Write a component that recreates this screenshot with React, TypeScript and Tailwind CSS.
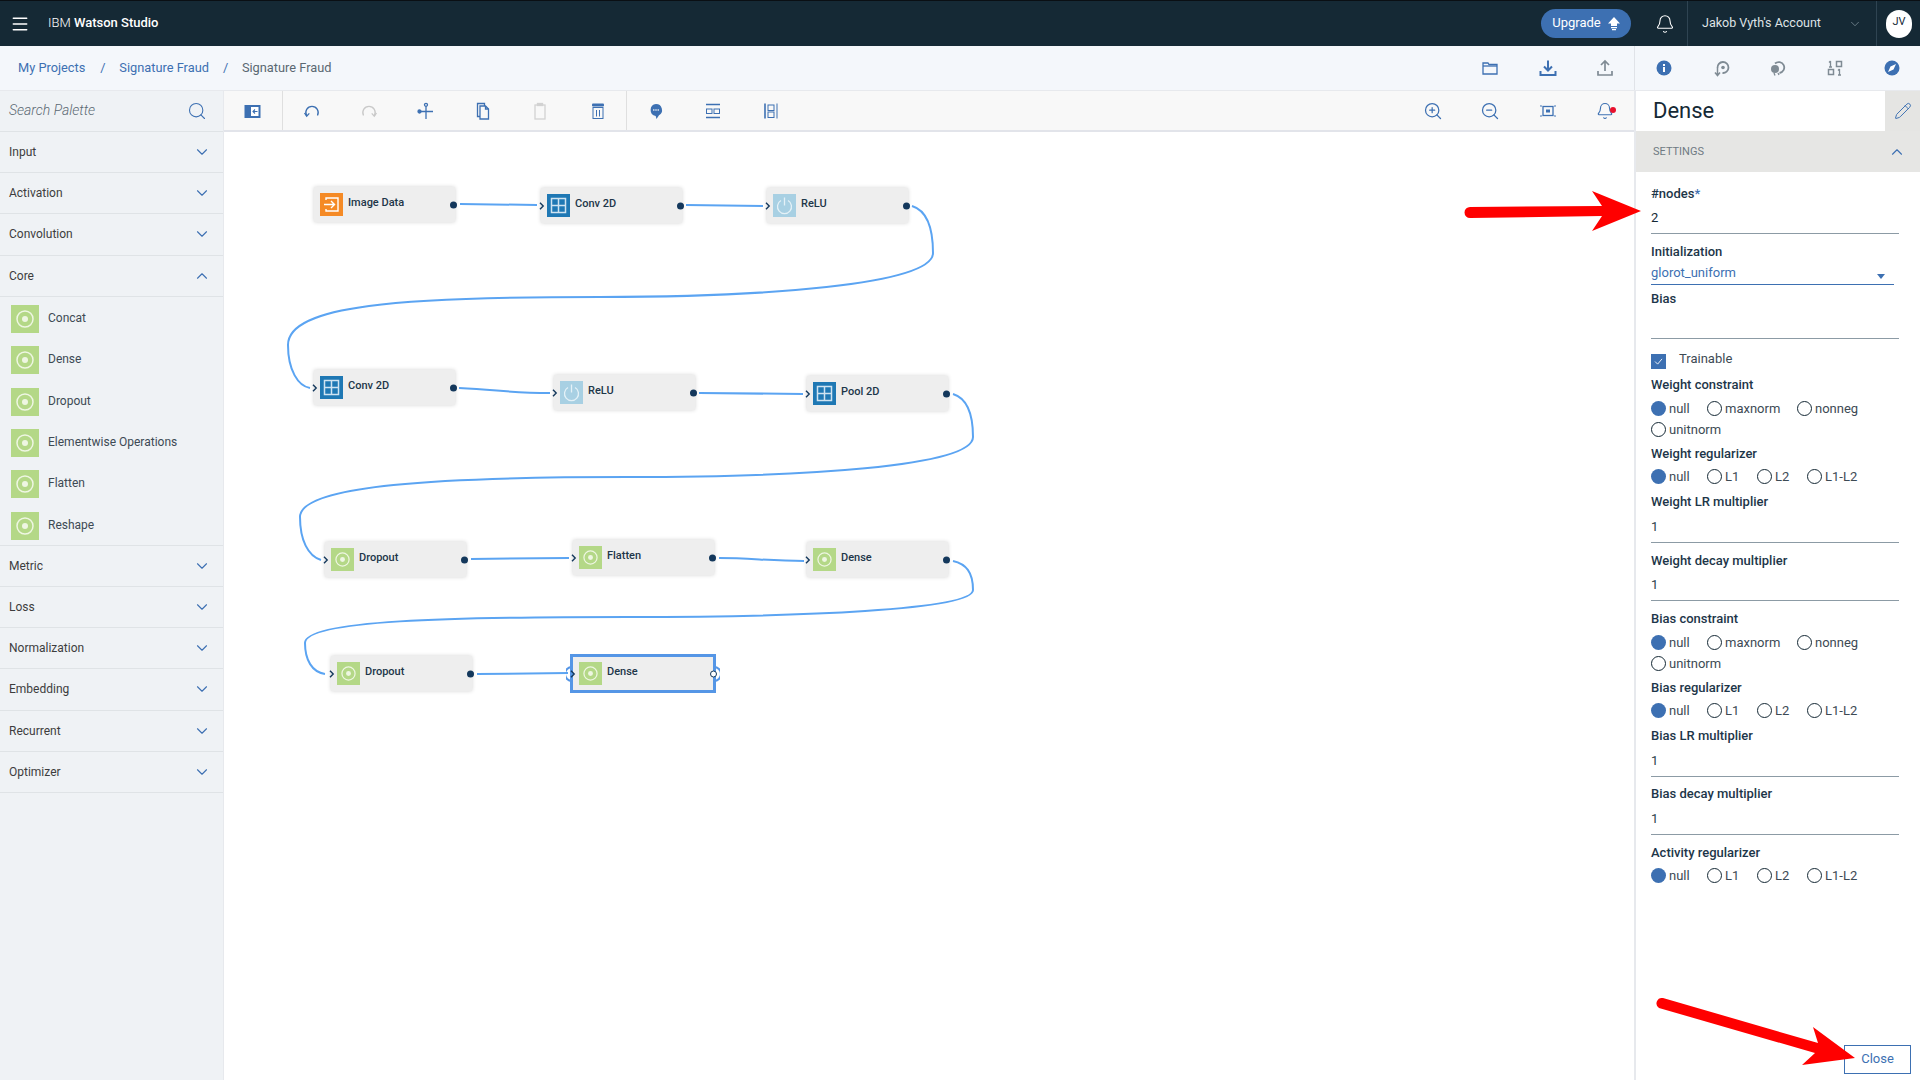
import { useState } from "react";
import { Bell, ChevronDown, ChevronUp, Menu, Pencil, Search, ZoomIn, ZoomOut } from "lucide-react";

const CATEGORIES_TOP = ["Input", "Activation", "Convolution"];
const CATEGORIES_BOTTOM = ["Metric", "Loss", "Normalization", "Embedding", "Recurrent", "Optimizer"];
const CORE_ITEMS = ["Concat", "Dense", "Dropout", "Elementwise Operations", "Flatten", "Reshape"];

type NodeKind = "input" | "grid" | "power" | "target";

const NODES: { label: string; kind: NodeKind; pos: string; noInput?: boolean }[] = [
  { label: "Image Data", kind: "input", pos: "left-[90px] top-[55px]", noInput: true },
  { label: "Conv 2D", kind: "grid", pos: "left-[317px] top-[56px]" },
  { label: "ReLU", kind: "power", pos: "left-[543px] top-[56px]" },
  { label: "Conv 2D", kind: "grid", pos: "left-[90px] top-[238px]" },
  { label: "ReLU", kind: "power", pos: "left-[330px] top-[243px]" },
  { label: "Pool 2D", kind: "grid", pos: "left-[583px] top-[244px]" },
  { label: "Dropout", kind: "target", pos: "left-[101px] top-[410px]" },
  { label: "Flatten", kind: "target", pos: "left-[349px] top-[408px]" },
  { label: "Dense", kind: "target", pos: "left-[583px] top-[410px]" },
  { label: "Dropout", kind: "target", pos: "left-[107px] top-[524px]" },
];

// link paths are in page coordinates, the svg viewBox starts at the canvas corner
const LINKS = [
  "M460 204 L537 205",
  "M686 205 L763 206",
  "M912 206 C925 210 933 225 933 253 C933 285 760 297 600 297 C400 297 288 305 288 345 C288 370 298 386 310 388",
  "M459 388 C500 390 510 393 550 393",
  "M699 393 L803 394",
  "M953 394 C966 398 973 412 973 437 C973 467 800 477 628 477 C440 477 300 485 300 517 C300 540 308 556 321 560",
  "M471 559 L569 558",
  "M719 558 C750 558 770 561 804 561",
  "M953 561 C966 564 973 572 973 590 C973 610 800 617 628 617 C450 617 305 620 305 643 C305 660 312 672 325 674",
  "M477 674 L568 673",
];

function Ic({ children, cls = "text-[#3d70b2]" }: { children: React.ReactNode; cls?: string }) {
  return (
    <svg viewBox="0 0 20 20" fill="none" stroke="currentColor" strokeWidth="1.3" className={`w-5 h-5 ${cls}`}>
      {children}
    </svg>
  );
}

function Cell({ children, w = "w-[57.5px]" }: { children: React.ReactNode; w?: string }) {
  return <div className={`${w} h-full flex items-center justify-center shrink-0`}>{children}</div>;
}

function NodeIcon({ kind }: { kind: NodeKind }) {
  if (kind === "input")
    return (
      <div className="w-[23px] h-[23px] bg-[#f58a25] flex items-center justify-center shrink-0">
        <svg viewBox="0 0 23 23" fill="none" stroke="#fff" strokeWidth="1.4" className="w-[23px] h-[23px]">
          <path d="M6 7V5h12v13H6v-2" />
          <path d="M4 11.5h10M11 8l3.5 3.5L11 15" />
        </svg>
      </div>
    );
  if (kind === "grid")
    return (
      <div className="w-[23px] h-[23px] bg-[#1f78b4] flex items-center justify-center shrink-0">
        <svg viewBox="0 0 23 23" fill="none" stroke="#cfe3f1" strokeWidth="1.5" className="w-[23px] h-[23px]">
          <rect x="4.5" y="4.5" width="14" height="14" />
          <path d="M11.5 4.5v14M4.5 11.5h14" />
        </svg>
      </div>
    );
  if (kind === "power")
    return (
      <div className="w-[23px] h-[23px] bg-[#a8d0e3] flex items-center justify-center shrink-0">
        <svg viewBox="0 0 23 23" fill="none" stroke="#e4f1f7" strokeWidth="1.3" className="w-[23px] h-[23px]">
          <path d="M8 6.5a7 7 0 1 0 7 0M11.500 3.500v8" />
        </svg>
      </div>
    );
  return <TargetIcon box="w-[23px] h-[23px]" size="w-[23px] h-[23px]" />;
}

function TargetIcon({ box, size }: { box: string; size: string }) {
  return (
    <div className={`${box} bg-[#b4d887] flex items-center justify-center shrink-0`}>
      <svg viewBox="0 0 28 28" fill="none" className={size}>
        <circle cx="14" cy="14" r="8" stroke="#eef6e2" strokeWidth="1.5" />
        <circle cx="14" cy="14" r="3" fill="#eef6e2" />
      </svg>
    </div>
  );
}

function InChevron({ cls = "left-[-2px]" }: { cls?: string }) {
  return (
    <svg viewBox="0 0 6 8" fill="none" stroke="#14385c" strokeWidth="1.4" className={`absolute ${cls} top-1/2 -translate-y-1/2 w-[6px] h-2`}>
      <path d="M1 .800 4.200 4 1 7.200" />
    </svg>
  );
}

function GraphNode({ label, kind, pos, noInput }: { label: string; kind: NodeKind; pos: string; noInput?: boolean }) {
  return (
    <div className={`absolute ${pos} w-[141px] h-[35px] bg-[#eeeeee] shadow-[0_0_4px_rgba(0,0,0,0.18)] flex items-center gap-[5px] pl-[6px]`}>
      <NodeIcon kind={kind} />
      <span className="text-[11px] font-medium text-[#1d3649] whitespace-nowrap -mt-[2px]">{label}</span>
      {!noInput && <InChevron />}
      <div className="absolute right-[-2px] top-1/2 -translate-y-1/2 w-[7px] h-[7px] rounded-full bg-[#14385c]" />
    </div>
  );
}

function CategoryRow({ label, open }: { label: string; open?: boolean }) {
  return (
    <div className="h-[41.2px] flex items-center justify-between pl-[9px] pr-[12px] border-b border-[#dfe3e6]">
      <span className="text-[12px] text-[#3d3d3d]">{label}</span>
      {open ? (
        <ChevronUp className="w-[18px] h-[18px] text-[#3d70b2]" strokeWidth={1.5} />
      ) : (
        <ChevronDown className="w-[18px] h-[18px] text-[#3d70b2]" strokeWidth={1.5} />
      )}
    </div>
  );
}

function Label({ children, cls = "" }: { children: React.ReactNode; cls?: string }) {
  return <div className={`h-[18px] leading-[20px] text-[13px] font-medium text-[#1d3649] ${cls}`}>{children}</div>;
}

function NumberField({ label, value, cls, box }: { label: string; value: string; cls: string; box: string }) {
  return (
    <>
      <Label cls={cls}>{label}</Label>
      <div className={`${box} flex items-center pt-[1px] border-b border-[#8c9ba5] text-[13px] text-[#2d3f4c] w-[248px]`}>{value}</div>
    </>
  );
}

function Radio({ label, on, w }: { label: string; on?: boolean; w: string }) {
  return (
    <div className={`${w} flex items-center gap-[3px] text-[13px] text-[#3d4a54] h-[21px]`}>
      <span className={`w-[15px] h-[15px] rounded-full shrink-0 ${on ? "bg-[#3d70b2]" : "border border-[#152935] bg-white"}`} />
      {label}
    </div>
  );
}

function ConstraintRadios() {
  return (
    <>
      <div className="flex mt-[5px]">
        <Radio label="null" on w="w-[56px]" />
        <Radio label="maxnorm" w="w-[90px]" />
        <Radio label="nonneg" w="w-[90px]" />
      </div>
      <Radio label="unitnorm" w="w-[90px]" />
    </>
  );
}

function RegularizerRadios() {
  return (
    <div className="flex mt-[4px]">
      <Radio label="null" on w="w-[56px]" />
      <Radio label="L1" w="w-[50px]" />
      <Radio label="L2" w="w-[50px]" />
      <Radio label="L1-L2" w="w-[70px]" />
    </div>
  );
}

function SettingsPanel() {
  return (
    <aside className="w-[286px] shrink-0 border-l-2 border-[#e7e9ed] bg-white flex flex-col">
      <div className="h-[40px] flex items-center justify-between shrink-0">
        <span className="pl-[17px] text-[22px] text-[#152935] -mt-[2px]">Dense</span>
        <div className="w-[35px] h-full bg-[#e5e5e3] flex items-center justify-center">
          <Pencil className="w-[18px] h-[18px] text-[#3d70b2]" strokeWidth={1.3} />
        </div>
      </div>
      <div className="h-[41px] bg-[#e6e6e4] flex items-center justify-between pl-[17px] pr-[14px] shrink-0">
        <span className="text-[11px] pt-[1px] text-[#6f7a82]">SETTINGS</span>
        <ChevronUp className="w-[18px] h-[18px] text-[#3d70b2]" strokeWidth={1.5} />
      </div>

      <div className="pl-[15px] pt-[12px] flex flex-col flex-1">
        <Label>
          #nodes<span className="text-[#3d70b2]">*</span>
        </Label>
        <div className="h-[32px] flex items-center border-b border-[#8c9ba5] text-[13px] text-[#152935] w-[248px]">2</div>

        <Label cls="mt-[8px]">Initialization</Label>
        <div className="h-[25px] w-[243px] flex items-center justify-between pt-[1px] pr-[9px] border-b border-[#3d70b2] text-[13px] text-[#3d70b2]">
          glorot_uniform
          <svg viewBox="0 0 8 5" className="w-2 h-[5px] mt-[8px]" fill="#3d70b2">
            <path d="M0 0h8L4 5z" />
          </svg>
        </div>

        <Label cls="mt-[4px]">Bias</Label>
        <div className="h-[32px] border-b border-[#8c9ba5] w-[248px]" />

        <div className="mt-[13px] h-[18px] flex items-start gap-[13px] text-[13px] leading-[14px] text-[#3d4a54]">
          <span className="w-[15px] h-[15px] bg-[#3d70b2] flex items-center justify-center mt-[2px]">
            <svg viewBox="0 0 10 8" fill="none" stroke="#fff" strokeWidth="1" className="w-[9px] h-[7px]">
              <path d="M1 4l3 3 5-6" />
            </svg>
          </span>
          Trainable
        </div>

        <Label cls="mt-[5px]">Weight constraint</Label>
        <ConstraintRadios />
        <Label cls="mt-[4px]">Weight regularizer</Label>
        <RegularizerRadios />
        <NumberField label="Weight LR multiplier" value="1" cls="mt-[5px]" box="h-[33px]" />
        <NumberField label="Weight decay multiplier" value="1" cls="mt-[8px]" box="h-[32px]" />

        <Label cls="mt-[8px]">Bias constraint</Label>
        <ConstraintRadios />
        <Label cls="mt-[4px]">Bias regularizer</Label>
        <RegularizerRadios />
        <NumberField label="Bias LR multiplier" value="1" cls="mt-[5px]" box="h-[33px]" />
        <NumberField label="Bias decay multiplier" value="1" cls="mt-[7px]" box="h-[33px]" />

        <Label cls="mt-[8px]">Activity regularizer</Label>
        <RegularizerRadios />

        <button className="mt-auto mb-[6px] mr-[9px] self-end w-[67px] h-[29px] pb-[2px] border-[1.5px] border-[#3d70b2] text-[13px] text-[#3d70b2] bg-white">
          Close
        </button>
      </div>
    </aside>
  );
}

function Toolbar() {
  return (
    <div className="h-[41px] bg-[#f8f8f8] border-b-2 border-[#e2e4ea] flex items-center shrink-0">
      <Cell w="w-[58px]">
        <Ic>
          <rect x="1.500" y="4" width="16" height="13" fill="currentColor" stroke="none" />
          <rect x="8" y="6" width="7.500" height="9" fill="#fff" stroke="none" />
          <path d="M14.500 10.500h-4M12 8.500l-2 2 2 2" strokeWidth="1.100" />
        </Ic>
      </Cell>
      <div className="flex h-full border-x border-[#dfdfdf]">
        <Cell w="w-[57.2px]">
          <Ic>
            <path d="M4.500 14.500a6.200 6.200 0 1 1 11 0" />
            <path d="M2.500 12l2.200 3.200 2.600-2.800" />
          </Ic>
        </Cell>
        <Cell w="w-[57.2px]">
          <Ic cls="text-[#c9c9c9]">
            <path d="M15.500 14.500a6.200 6.200 0 1 0-11 0" />
            <path d="M17.500 12l-2.200 3.200-2.600-2.800" />
          </Ic>
        </Cell>
        <Cell w="w-[57.2px]">
          <Ic>
            <path d="M10 5.500V18M3 10.500h14" />
            <circle cx="10" cy="3.800" r="1.500" />
            <circle cx="3.500" cy="10.500" r="1.500" fill="currentColor" />
          </Ic>
        </Cell>
        <Cell w="w-[57.2px]">
          <Ic>
            <path d="M7 15.500H4.500V2.500h7V5" />
            <path d="M7 5h5.500l3 3v10H7z" />
            <path d="M12.500 5v3h3" />
          </Ic>
        </Cell>
        <Cell w="w-[57.2px]">
          <Ic cls="text-[#d2d2d2]">
            <rect x="5" y="4" width="10" height="14" />
            <rect x="7.500" y="2.500" width="5" height="2" fill="currentColor" />
          </Ic>
        </Cell>
        <Cell w="w-[57.2px]">
          <Ic>
            <rect x="4" y="2.500" width="12" height="3" rx="1" fill="currentColor" stroke="none" />
            <rect x="5" y="6.500" width="10" height="11" strokeWidth="1" />
            <path d="M8.500 9v6.500M11.500 9v6.500" strokeWidth="1" />
          </Ic>
        </Cell>
      </div>
      <Cell>
        <Ic>
          <path d="M10 3a6 6 0 0 1 3 11.200L10.500 18l-.8-3.100A6 6 0 0 1 10 3z" fill="currentColor" stroke="none" />
          <path d="M7.200 9h1.200M9.400 9h1.200M11.600 9h1.200" stroke="#fff" />
        </Ic>
      </Cell>
      <Cell>
        <Ic>
          <path d="M3 3.500h14M3 16.500h14" strokeWidth="1.500" />
          <rect x="3.500" y="8" width="5.500" height="4.500" strokeWidth="1" />
          <rect x="11" y="8" width="5.500" height="4.500" strokeWidth="1" />
        </Ic>
      </Cell>
      <Cell>
        <Ic>
          <path d="M4 2.500v15" strokeWidth="1.600" />
          <path d="M16 2.500v15" strokeWidth="1" />
          <rect x="7" y="4" width="6" height="5.500" strokeWidth="1" />
          <rect x="7" y="11" width="6" height="5.500" strokeWidth="1" />
        </Ic>
      </Cell>
      <div className="ml-auto flex h-full">
        <Cell>
          <ZoomIn className="w-5 h-5 text-[#3d70b2]" strokeWidth={1.5} />
        </Cell>
        <Cell>
          <ZoomOut className="w-5 h-5 text-[#3d70b2]" strokeWidth={1.5} />
        </Cell>
        <Cell>
          <Ic>
            <rect x="5" y="5.500" width="10" height="9" />
            <rect x="8" y="8.500" width="4" height="3" fill="currentColor" stroke="none" />
            <path d="M2.500 4.500l1 1M17.500 4.500l-1 1M2.500 15.500l1-1M17.500 15.500l-1-1" />
          </Ic>
        </Cell>
        <Cell>
          <div className="relative">
            <Bell className="w-[18px] h-[18px] text-[#3d70b2]" strokeWidth={1.5} />
            <span className="absolute right-[-2px] top-[5px] w-[6px] h-[6px] rounded-full bg-[#e8112d]" />
          </div>
        </Cell>
      </div>
    </div>
  );
}

function Canvas() {
  return (
    <div className="relative flex-1 bg-white">
      <svg viewBox="224 132 1410 948" className="absolute inset-0 w-full h-full" fill="none" stroke="#5ba4f2" strokeWidth="2">
        {LINKS.map((d, i) => (
          <path key={i} d={d} />
        ))}
      </svg>
      {NODES.map((n, i) => (
        <GraphNode key={i} {...n} />
      ))}
      <div className="absolute left-[346px] top-[522px] w-[146px] h-[39px] bg-[#eeeeee] border-[3px] border-[#5596e6] flex items-center gap-[5px] pl-[6px]">
        <NodeIcon kind="target" />
        <span className="text-[11px] font-medium text-[#1d3649] -mt-[2px]">Dense</span>
        <svg viewBox="0 0 6 16" fill="none" stroke="#5596e6" strokeWidth="2" className="absolute left-[-7px] top-1/2 -translate-y-1/2 w-[6px] h-4">
          <path d="M6 1A7 7 0 0 0 6 15" />
        </svg>
        <svg viewBox="0 0 6 16" fill="none" stroke="#5596e6" strokeWidth="2" className="absolute right-[-7px] top-1/2 -translate-y-1/2 w-[6px] h-4">
          <path d="M0 1A7 7 0 0 1 0 15" />
        </svg>
        <InChevron cls="left-[-3px]" />
        <div className="absolute right-[-4px] top-1/2 -translate-y-1/2 w-[7px] h-[7px] rounded-full bg-white border border-[#14385c]" />
      </div>
    </div>
  );
}

export default function App() {
  const [selected] = useState("Dense");

  return (
    <div className="relative w-[1920px] h-[1080px] overflow-hidden flex flex-col bg-white font-['Roboto',sans-serif]">
      {/* Top bar */}
      <header className="h-[46px] bg-[#152935] border-t border-[#0a0f14] flex items-center text-white shrink-0">
        <Menu className="w-[20px] h-[20px] ml-[10px]" strokeWidth={1.8} />
        <div className="ml-[18px] text-[13px] -mt-[2px]">
          <span className="font-light">IBM</span> <span className="font-medium">Watson Studio</span>
        </div>
        <div className="ml-auto mr-[24px] w-[90px] h-[29px] rounded-full bg-[#3d70b2] flex items-center justify-center gap-[7px] text-[13px]">
          <span className="-mt-[1px]">Upgrade</span>
          <svg viewBox="0 0 12 14" fill="#fff" className="w-3 h-[14px]">
            <path d="M6 0l6 6.500H9V9H3V6.500H0zM3 10h6v1.300H3zM4 12h4v1.300H4z" />
          </svg>
        </div>
        <Bell className="w-5 h-5 mr-[12px]" strokeWidth={1.3} />
        <div className="h-full border-x border-[#2f4452] w-[190px] flex items-center pl-[14px] justify-between pr-[14px] text-[12.5px] text-[#dfe3e6]">
          Jakob Vyth's Account
          <ChevronDown className="w-[14px] h-[14px] text-[#9fb0ba]" strokeWidth={1} />
        </div>
        <div className="ml-[9px] mr-[8px] w-[26px] h-[28px] pb-[3px] rounded-full bg-white text-[#152935] text-[11px] flex items-center justify-center">
          JV
        </div>
      </header>

      {/* Breadcrumbs */}
      <div className="h-[45px] bg-[#f4f7fb] border-b border-[#e7e9ed] flex items-center shrink-0">
        <nav className="pl-[18px] flex items-center text-[12.8px] text-[#3d70b2]">
          <span>My Projects</span>
          <span className="ml-[15px] w-[19px]">/</span>
          <span>Signature Fraud</span>
          <span className="ml-[14px] w-[19px]">/</span>
          <span className="text-[#5a6872]">Signature Fraud</span>
        </nav>
        <div className="ml-auto flex h-full">
          <Cell>
            <Ic>
              <path d="M3 16V5h5l1 1.500h8V16z" />
              <path d="M3 8h14" />
            </Ic>
          </Cell>
          <Cell>
            <Ic>
              <path d="M10 2.500v10M6 8.500l4 4 4-4" strokeWidth="2" />
              <path d="M2.500 13v4h15v-4" strokeWidth="2" />
            </Ic>
          </Cell>
          <Cell>
            <Ic cls="text-[#7f8b94]">
              <path d="M10 13V3M6 7l4-4 4 4" strokeWidth="1.700" />
              <path d="M3 13v4h14v-4" strokeWidth="1.700" />
            </Ic>
          </Cell>
        </div>
        <div className="flex h-full w-[286px] border-l border-[#e0e3e8] shrink-0">
          <Cell w="w-[57.2px]">
            <Ic>
              <circle cx="10" cy="10" r="7.500" fill="currentColor" stroke="none" />
              <rect x="9" y="9" width="2" height="5" fill="#fff" stroke="none" />
              <rect x="9" y="6" width="2" height="2" fill="#fff" stroke="none" />
            </Ic>
          </Cell>
          <Cell w="w-[57.2px]">
            <Ic cls="text-[#7f8b94]">
              <path d="M6.500 10a5.500 5.500 0 1 1 5 5" strokeWidth="1.800" />
              <circle cx="12" cy="9.500" r="1.800" fill="currentColor" stroke="none" />
              <path d="M6.500 10v7M4 14.500l2.500 3 2.500-3" strokeWidth="1.500" />
            </Ic>
          </Cell>
          <Cell w="w-[57.2px]">
            <Ic cls="text-[#7f8b94]">
              <path d="M7 5.500a5.500 5.500 0 1 1 4.500 9.500" strokeWidth="1.800" />
              <circle cx="7" cy="11" r="4" fill="currentColor" stroke="none" />
              <path d="M6 15l1 2.500M10 15l1 2" />
            </Ic>
          </Cell>
          <Cell w="w-[57.2px]">
            <Ic cls="text-[#7f8b94]">
              <path d="M5.500 3v6M4 4.500L5.500 3M4 9h3" strokeWidth="1.300" />
              <rect x="11.500" y="3.500" width="5" height="5" strokeWidth="1.500" />
              <rect x="3.500" y="11.500" width="5" height="5" strokeWidth="1.500" />
              <path d="M14.500 11v6M13 12.500L14.500 11M13 17h3" strokeWidth="1.300" />
            </Ic>
          </Cell>
          <Cell w="w-[57.2px]">
            <Ic>
              <circle cx="10" cy="10" r="7.500" fill="currentColor" stroke="none" />
              <path d="M14 6L8.500 8.500 6 14l5.500-2.500z" fill="#fff" stroke="none" />
            </Ic>
          </Cell>
        </div>
      </div>

      {/* Main area */}
      <div className="flex-1 flex min-h-0">
        <aside className="w-[224px] shrink-0 bg-[#eff2f5] border-r border-[#e7e9ed]">
          <div className="h-[41px] flex items-center justify-between pl-[9px] pr-[16px] border-b border-[#dfe3e6]">
            <span className="italic font-light text-[14px] text-[#5a6872] -mt-[2px]">Search Palette</span>
            <Search className="w-[20px] h-[20px] text-[#3d70b2]" strokeWidth={1.3} />
          </div>
          {CATEGORIES_TOP.map((c) => (
            <CategoryRow key={c} label={c} />
          ))}
          <CategoryRow label="Core" open />
          <div className="h-[249px] border-b border-[#dfe3e6] pt-[8px] flex flex-col gap-[13.4px] pl-[11px]">
            {CORE_ITEMS.map((item) => (
              <div key={item} className="h-[28px] flex items-center gap-[9px]">
                <TargetIcon box="w-[28px] h-[28px]" size="w-[28px] h-[28px]" />
                <span className={`text-[12px] -mt-[2px] ${selected === item ? "text-[#3d4a54]" : "text-[#3d4a54]"}`}>{item}</span>
              </div>
            ))}
          </div>
          {CATEGORIES_BOTTOM.map((c) => (
            <CategoryRow key={c} label={c} />
          ))}
        </aside>

        <div className="flex-1 flex flex-col min-w-0">
          <Toolbar />
          <Canvas />
        </div>

        <SettingsPanel />
      </div>

      {/* Annotation arrows drawn over the screenshot */}
      <svg viewBox="0 0 1920 1080" className="absolute inset-0 w-full h-full pointer-events-none">
        <path d="M1470 207 L1602 206 L1592 191 L1641 211 L1592 231 L1602 216 L1470 218 A5.500 5.500 0 0 1 1470 207 Z" fill="#ff0000" />
        <path d="M1663 998 L1818 1043 L1813 1027 L1855 1058 L1802 1065 L1815 1053 L1659 1008 A5.500 5.500 0 0 1 1663 998 Z" fill="#ff0000" />
      </svg>
    </div>
  );
}
